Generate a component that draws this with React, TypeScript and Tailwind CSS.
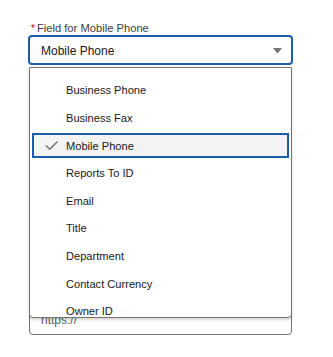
import React from 'react';

const options = [
  'Business Phone',
  'Business Fax',
  'Mobile Phone',
  'Reports To ID',
  'Email',
  'Title',
  'Department',
  'Contact Currency',
  'Owner ID',
  'Created By ID',
];

const selected = 'Mobile Phone';

const CheckIcon: React.FC = () => (
  <svg width="14" height="12" viewBox="0 0 14 12" className="shrink-0">
    <path d="M1 5.5 L4.8 9.2 L12.5 1.5" fill="none" stroke="#747474" strokeWidth="1.6" />
  </svg>
);

const App: React.FC = () => {
  return (
    <div
      className="w-[333px] h-[357px] bg-white pt-[22px] pl-[28px] overflow-hidden"
      style={{ fontFamily: '"Liberation Sans", Arial, sans-serif' }}
    >
      <div className="w-[265px]">
        <label className="flex items-center h-[13px] pl-[3px] text-[11.2px] text-[#3e3e3c] leading-[13px]">
          <span className="text-[#ba0517] mr-[2px] text-[10px]">*</span>
          Field for Mobile Phone
        </label>

        <div className="relative">
          <div className="h-[30px] border-2 border-[#1b5cab] rounded-[4px] flex items-center justify-between pt-[2px] pl-[11px] pr-[9px] text-[12px] text-[#181818]">
            <span>Mobile Phone</span>
            <svg width="9" height="6" viewBox="0 0 9 6">
              <path d="M0 0 L9 0 L4.5 5.5 Z" fill="#747474" />
            </svg>
          </div>

          {/* field underneath the open menu */}
          <div className="mt-[240px] ml-[1px] w-[263px] h-[30px] border border-[#747474] rounded-[4px] flex items-center pl-[11px] text-[12px] text-[#5c5c5c]">
            https://
          </div>

          <div className="absolute left-[1px] top-[32px] w-[263px] h-[251px] bg-white border border-[#747474] rounded-b-[4px] shadow-[0_2px_3px_rgba(0,0,0,0.16)] overflow-hidden pt-[9px]">
            {options.map((opt) => {
              const isSel = opt === selected;
              return (
                <div key={opt} className="h-[27.6px] px-[2px] py-[1.3px]">
                  <div
                    className={`h-full flex items-center text-[11.1px] text-[#181818] ${
                      isSel ? 'bg-[#f3f3f3] border-2 border-[#1b5cab] pl-[11px]' : 'pl-[34px]'
                    }`}
                  >
                    {isSel && (
                      <span className="w-[21px] flex items-center">
                        <CheckIcon />
                      </span>
                    )}
                    {opt}
                  </div>
                </div>
              );
            })}
          </div>
        </div>
      </div>
    </div>
  );
};

export default App;
